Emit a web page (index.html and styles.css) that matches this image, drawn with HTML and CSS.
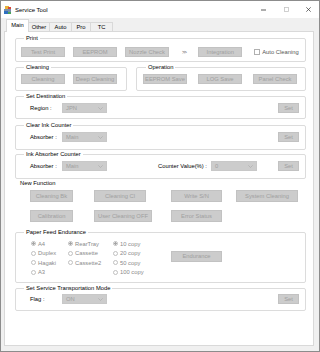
FILE: index.html
```html
<html>
<head>
<link rel="stylesheet" href="styles.css">
</head>
<body>
<div class="window">
	<div class="titlebar">
		<svg class="app-icon" viewBox="0 0 7 8" width="7" height="8">
			<rect x="1" y="0" width="4" height="3" fill="#e8b43a"/>
			<rect x="4" y="1" width="3" height="3" fill="#d8463a"/>
			<rect x="0" y="3" width="7" height="3" fill="#7a8ea8"/>
			<rect x="0" y="5" width="4" height="3" fill="#2f6fc0"/>
			<rect x="4" y="6" width="3" height="2" fill="#4aa35a"/>
		</svg>
		<span class="title">Service Tool</span>
		<div class="controls">
			<svg class="ctl" viewBox="0 0 5 5" width="5" height="5"><line x1="0" y1="3" x2="5" y2="3" stroke="#333" stroke-width="0.8"/></svg>
			<svg class="ctl max" viewBox="0 0 5 5" width="5" height="5"><rect x="0.5" y="0.5" width="4" height="4" fill="none" stroke="#c4c4c4" stroke-width="0.8"/></svg>
			<svg class="ctl close" viewBox="0 0 5 5" width="5" height="5"><path d="M0.3 0.3 L4.7 4.7 M4.7 0.3 L0.3 4.7" stroke="#333" stroke-width="0.7"/></svg>
		</div>
	</div>
	<div class="tabs">
		<span class="tab selected w-main">Main</span>
		<span class="tab w-other">Other</span>
		<span class="tab w-auto">Auto</span>
		<span class="tab w-pro">Pro</span>
		<span class="tab w-tc">TC</span>
	</div>
	<div class="page">
		<fieldset class="group g-print">
			<legend>Print</legend>
			<div class="row">
				<span class="btn">Test Print</span>
				<span class="btn">EEPROM</span>
				<span class="btn">Nozzle Check</span>
				<span class="arrows">&gt;&gt;</span>
				<span class="btn">Integration</span>
				<span class="check"></span>
				<span class="check-label">Auto Cleaning</span>
			</div>
		</fieldset>
		<div class="pair">
			<fieldset class="group g-cleaning">
				<legend>Cleaning</legend>
				<div class="row">
					<span class="btn">Cleaning</span>
					<span class="btn">Deep Cleaning</span>
				</div>
			</fieldset>
			<fieldset class="group g-operation">
				<legend>Operation</legend>
				<div class="row">
					<span class="btn">EEPROM Save</span>
					<span class="btn">LOG Save</span>
					<span class="btn">Panel Check</span>
				</div>
			</fieldset>
		</div>
		<fieldset class="group g-dest">
			<legend>Set Destination</legend>
			<div class="row form">
				<span class="label">Region :</span>
				<span class="combo">JPN<svg viewBox="0 0 5 3" width="5" height="3"><polyline points="0.3,0.3 2.5,2.5 4.7,0.3" fill="none" stroke="#a8a8a8" stroke-width="0.6"/></svg></span>
				<span class="btn set">Set</span>
			</div>
		</fieldset>
		<fieldset class="group g-clear">
			<legend>Clear Ink Counter</legend>
			<div class="row form">
				<span class="label">Absorber :</span>
				<span class="combo">Main<svg viewBox="0 0 5 3" width="5" height="3"><polyline points="0.3,0.3 2.5,2.5 4.7,0.3" fill="none" stroke="#a8a8a8" stroke-width="0.6"/></svg></span>
				<span class="btn set">Set</span>
			</div>
		</fieldset>
		<fieldset class="group g-absorber">
			<legend>Ink Absorber Counter</legend>
			<div class="row form">
				<span class="label">Absorber :</span>
				<span class="combo">Main<svg viewBox="0 0 5 3" width="5" height="3"><polyline points="0.3,0.3 2.5,2.5 4.7,0.3" fill="none" stroke="#a8a8a8" stroke-width="0.6"/></svg></span>
				<span class="label counter">Counter Value(%) :</span>
				<span class="combo wide">0<svg viewBox="0 0 5 3" width="5" height="3"><polyline points="0.3,0.3 2.5,2.5 4.7,0.3" fill="none" stroke="#a8a8a8" stroke-width="0.6"/></svg></span>
				<span class="btn set">Set</span>
			</div>
		</fieldset>
		<div class="newfunc">
			<div class="newfunc-title">New Function</div>
			<div class="newfunc-grid">
				<span class="btn nf w43">Cleaning Bk</span>
				<span class="btn nf w52">Cleaning Cl</span>
				<span class="btn nf w51">Write S/N</span>
				<span class="btn nf w62">System Cleaning</span>
				<span class="btn nf w43">Calibration</span>
				<span class="btn nf w58">User Cleaning OFF</span>
				<span class="btn nf w51">Error Status</span>
			</div>
		</div>
		<fieldset class="group g-paper">
			<legend>Paper Feed Endurance</legend>
			<div class="paper-grid">
				<span class="radio on">A4</span>
				<span class="radio on">RearTray</span>
				<span class="radio on">10 copy</span>
				<span class="btn endurance">Endurance</span>
				<span class="radio">Duplex</span>
				<span class="radio">Cassette</span>
				<span class="radio">20 copy</span>
				<span class="radio">Hagaki</span>
				<span class="radio">Cassette2</span>
				<span class="radio">50 copy</span>
				<span class="radio">A3</span>
				<span></span>
				<span class="radio">100 copy</span>
			</div>
		</fieldset>
		<fieldset class="group g-transport">
			<legend>Set Service Transportation Mode</legend>
			<div class="row form">
				<span class="label">Flag :</span>
				<span class="combo">ON<svg viewBox="0 0 5 3" width="5" height="3"><polyline points="0.3,0.3 2.5,2.5 4.7,0.3" fill="none" stroke="#a8a8a8" stroke-width="0.6"/></svg></span>
				<span class="btn set">Set</span>
			</div>
		</fieldset>
	</div>
</div>
</body>
</html>
```

FILE: styles.css
```css
html,body {
	margin: 0;
	padding: 0;
	background: #fff;
}
body {
	font-family: "Liberation Sans", Arial, sans-serif;
	font-size: 5.8px;
	color: #000;
}
.window {
	box-sizing: border-box;
	width: 320px;
	height: 352px;
	border: 1px solid #8c8c8c;
	background: #f0f0f0;
	display: flex;
	flex-direction: column;
}

/* title bar */
.titlebar {
	height: 17px;
	flex: none;
	background: #fff;
	display: flex;
	align-items: center;
	padding: 0 8px 0 3px;
}
.app-icon {
	display: block;
	margin-right: 4px;
}
.title {
	font-size: 6px;
	color: #000;
}
.controls {
	margin-left: auto;
	display: flex;
	align-items: center;
}
.ctl {
	display: block;
}
.ctl.max {
	margin-left: 18px;
}
.ctl.close {
	margin-left: 17px;
}

/* tabs */
.tabs {
	height: 14px;
	flex: none;
	margin-bottom: -1px;
	padding-left: 5px;
	display: flex;
	align-items: flex-end;
}
.tab {
	box-sizing: border-box;
	height: 9px;
	margin-bottom: 1px;
	margin-left: -1px;
	border: 1px solid #d9d9d9;
	border-bottom: none;
	background: #f0f0f0;
	text-align: center;
	line-height: 8px;
}
.tab.selected {
	position: relative;
	z-index: 1;
	height: 13px;
	margin-bottom: 0;
	margin-left: 0;
	background: #fff;
	line-height: 11px;
}
.w-main { width: 23px; }
.w-other { width: 22px; }
.w-auto { width: 23px; }
.w-pro { width: 20px; }
.w-tc { width: 23px; }

/* tab page */
.page {
	box-sizing: border-box;
	height: 315px;
	flex: none;
	margin: 0 5px 0 3px;
	padding: 2px 7px 0 10px;
	background: #fff;
	border: 1px solid #d9d9d9;
}

.group {
	margin: 0;
	padding: 0 6px 0 5px;
	border: 1px solid #dcdcdc;
	border-radius: 2px;
	min-width: 0;
}
.group legend {
	margin-left: 3px;
	padding: 0 2px;
	line-height: 8px;
	color: #000;
}

.row {
	display: flex;
	align-items: center;
	white-space: nowrap;
}
.row > * {
	flex: none;
}
.form {
	padding-left: 9px;
}

.btn {
	box-sizing: border-box;
	display: block;
	width: 44px;
	height: 10px;
	line-height: 8px;
	background: #cccccc;
	border: 1px solid #c2c2c2;
	color: #a0a0a0;
	text-align: center;
	white-space: nowrap;
}
.g-print .btn + .btn,
.g-cleaning .btn + .btn {
	margin-left: 8px;
}
.arrows {
	margin-left: 13px;
	color: #555;
	letter-spacing: -0.8px;
	font-size: 5px;
}
.g-print .arrows + .btn {
	margin-left: 12px;
}
.check {
	box-sizing: border-box;
	width: 6px;
	height: 6px;
	margin-left: 12px;
	border: 1px solid #b0b0b0;
	background: #fff;
}
.check-label {
	margin-left: 2px;
	color: #555;
}

.g-print {
	padding-top: 5px;
	padding-bottom: 4px;
}
.pair {
	display: flex;
	gap: 9px;
	margin-top: 1px;
}
.g-cleaning {
	width: 112px;
	box-sizing: border-box;
	padding-top: 3px;
	padding-bottom: 6px;
}
.g-operation {
	flex: 1;
	padding: 3px 6px 6px 6px;
}
.g-operation .btn + .btn {
	margin-left: 11px;
}

.label {
	width: 32px;
	color: #000;
}
.combo {
	box-sizing: border-box;
	width: 45px;
	height: 10px;
	display: flex;
	align-items: center;
	justify-content: space-between;
	padding: 0 3px;
	background: #cccccc;
	border: 1px solid #c8c8c8;
	color: #a0a0a0;
}
.combo svg {
	display: block;
}
.combo.wide {
	width: 46px;
}
.label.counter {
	width: auto;
	margin-left: 51px;
	margin-right: 4px;
}
.row > .btn.set {
	width: 21px;
	margin-left: auto;
}

.g-dest {
	margin-top: 1px;
	padding-top: 3px;
	padding-bottom: 5px;
}
.g-clear {
	margin-top: 2px;
	padding-top: 3px;
	padding-bottom: 7px;
}
.g-absorber {
	padding-top: 3px;
	padding-bottom: 7px;
}

/* new function */
.newfunc {
	padding-left: 5px;
}
.newfunc-title {
	line-height: 8px;
}
.newfunc-grid {
	display: grid;
	grid-template-columns: 64px 77px 65px 62px;
	row-gap: 8px;
	margin: 3px 0 0 10px;
}
.btn.nf {
	height: 12px;
	line-height: 10px;
}
.w43 { width: 43px; }
.w51 { width: 51px; }
.w52 { width: 52px; }
.w58 { width: 58px; }
.w62 { width: 62px; }

/* paper feed */
.g-paper {
	margin-top: 6px;
	padding-top: 3px;
	padding-bottom: 5px;
}
.paper-grid {
	display: grid;
	grid-template-columns: 37px 45px 58px 51px;
	grid-auto-rows: 9.5px;
	padding-left: 10px;
}
.radio {
	display: flex;
	align-items: center;
	color: #8a8a8a;
	white-space: nowrap;
}
.radio::before {
	content: "";
	box-sizing: border-box;
	width: 5px;
	height: 5px;
	margin-right: 2px;
	border: 1px solid #c0c0c0;
	border-radius: 50%;
	background: #fff;
}
.radio.on::before {
	background: radial-gradient(circle, #a6a6a6 0 1.2px, #fff 1.4px);
}
.btn.endurance {
	grid-column: 4;
	grid-row: 1 / span 4;
	align-self: center;
	width: 51px;
	height: 11px;
	line-height: 9px;
	margin-bottom: 3px;
}

.g-transport {
	margin-top: 1px;
	padding-top: 2px;
	padding-bottom: 6px;
}
```
